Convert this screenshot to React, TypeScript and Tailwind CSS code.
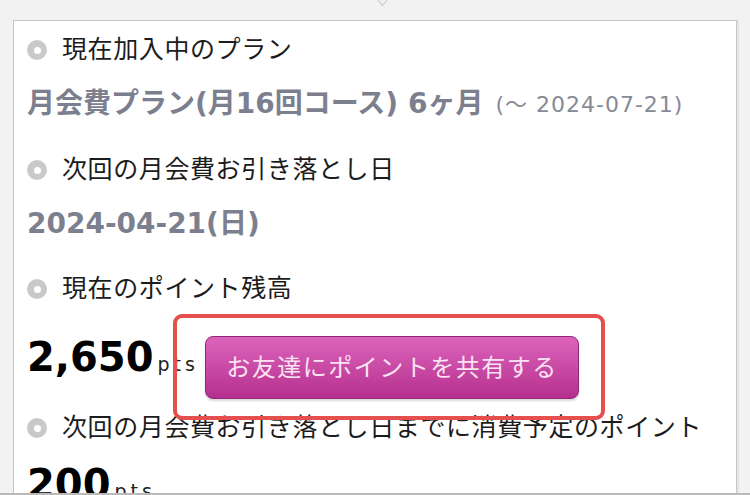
import React from "react";

const JP = { fontFamily: '"Liberation Sans", "Noto Sans CJK JP", sans-serif' };
const WIDE = { fontFamily: '"DejaVu Sans", "Noto Sans CJK JP", sans-serif' };

function Bullet() {
  return (
    <span className="w-[20px] h-[20px] rounded-full bg-[#c9c9c9] flex items-center justify-center shrink-0">
      <span className="w-[7px] h-[7px] rounded-full bg-white" />
    </span>
  );
}

function Label({ children, className = "" }: { children: React.ReactNode; className?: string }) {
  return (
    <div className={`h-[48px] flex items-center gap-[15px] ${className}`}>
      <Bullet />
      <span className="text-[25px] text-[#1c1c1c] tracking-[0.6px] whitespace-nowrap">{children}</span>
    </div>
  );
}

function Points({ value }: { value: string }) {
  return (
    <div className="flex items-baseline" style={WIDE}>
      <span className="text-[40px] font-bold text-black leading-none">{value}</span>
      <span className="ml-[4px] text-[19px] tracking-[4px] text-[#222]">pts</span>
    </div>
  );
}

export default function App() {
  return (
    <div className="w-[750px] h-[495px] bg-[#f2f2f2] flex flex-col overflow-hidden" style={JP}>
      <div className="h-[493px] overflow-hidden flex flex-col">
        {/* top chevron */}
        <div className="h-[20px] shrink-0 pl-[377px]">
          <svg width="11" height="7" viewBox="0 0 11 7">
            <path d="M1 0 L5.5 5.5 L10 0" fill="none" stroke="#cfcfcf" strokeWidth="1.2" />
          </svg>
        </div>

        <div className="mx-[13px] border border-[#c6c6ca] bg-white px-[13px] pt-[5px] flex-1 shadow-[2px_0_0_#e4e4e6]">
          <Label>現在加入中のプラン</Label>
          <div className="mt-[6px] h-[48px] flex items-center whitespace-nowrap" style={WIDE}>
            <span className="text-[28px] font-bold text-[#7c808e]">月会費プラン(月16回コース) 6ヶ月</span>
            <span className="ml-[12px] text-[22px] tracking-[1px] text-[#868a96]">(〜 2024-07-21)</span>
          </div>

          <Label className="mt-[18px]">次回の月会費お引き落とし日</Label>
          <div className="mt-[6px] h-[48px] flex items-center" style={WIDE}>
            <span className="text-[28px] font-bold text-[#7c808e]">2024-04-21(日)</span>
          </div>

          <Label className="mt-[17px]">現在のポイント残高</Label>
          <div className="mt-[23px] h-[63px] flex items-center">
            <div className="-mt-[20px]">
              <Points value="2,650" />
            </div>
            <div className="relative ml-[6px]">
              <div className="absolute -left-[32px] -top-[22px] -right-[26px] -bottom-[21px] border-[4px] border-[#e5504f] rounded-[9px]" />
              <button className="relative w-[374px] h-[63px] rounded-[8px] border border-[#93287a] bg-gradient-to-b from-[#dc63bb] to-[#b52f8e] text-[24px] text-[#fae2f2] tracking-[1.5px] shadow-[0_2px_2px_rgba(0,0,0,0.15)]">
                お友達にポイントを共有する
              </button>
            </div>
          </div>

          <Label className="mt-[5px]">次回の月会費お引き落とし日までに消費予定のポイント</Label>
          <div className="mt-[12px]">
            <Points value="200" />
          </div>
        </div>
      </div>
      <div className="h-[2px] bg-[#b9b9b9]" />
    </div>
  );
}
